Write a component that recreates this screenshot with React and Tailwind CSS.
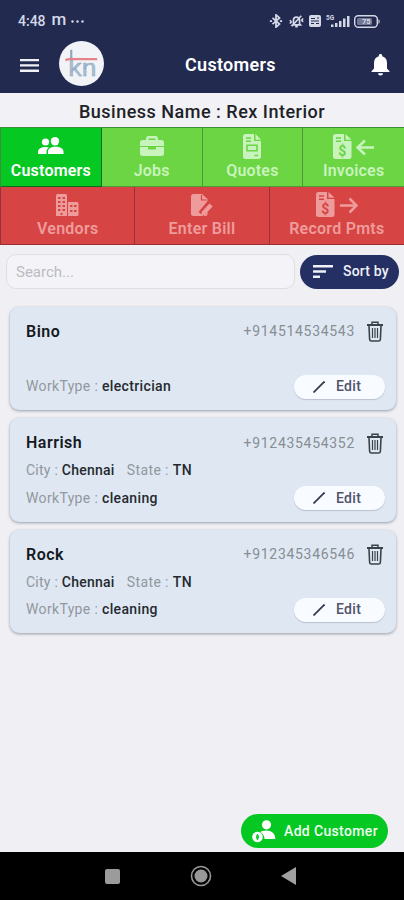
import React from "react";

const customers = [
  { id: 1, name: "Bino", phone: "+914514534543", workType: "electrician" },
  {
    id: 2,
    name: "Harrish",
    phone: "+912435454352",
    city: "Chennai",
    state: "TN",
    workType: "cleaning",
  },
  {
    id: 3,
    name: "Rock",
    phone: "+912345346546",
    city: "Chennai",
    state: "TN",
    workType: "cleaning",
  },
];

function StatusBar() {
  return (
    <div className="flex h-10 items-center pl-[18px] pr-[23px] pt-[2px] text-[#d5d8e6]">
      <span className="text-[14px] font-medium">4:48</span>
      <span className="ml-[6px] -mt-[3px] text-[17px] leading-none font-medium">m</span>
      <svg className="ml-[5px]" width="13" height="3" viewBox="0 0 13 3" fill="currentColor">
        <circle cx="1.5" cy="1.5" r="1.2" />
        <circle cx="6.5" cy="1.5" r="1.2" />
        <circle cx="11.5" cy="1.5" r="1.2" />
      </svg>
      <div className="ml-auto flex items-center">
        <svg width="14" height="14" viewBox="0 0 14 16" fill="none" stroke="currentColor" strokeWidth="2">
          <path d="M3 4.5l8 7L7 15V1l4 3.500-8 7" />
          <path d="M0 8h2.500M11.500 8H14" />
        </svg>
        <svg className="ml-[5px]" width="17" height="14" viewBox="0 0 17 16" fill="none" stroke="currentColor" strokeWidth="1.900">
          <path d="M5 11.500V7a3.500 3.500 0 0 1 7 0v4.500l1 1H4zM7 14.500h3M3 14L14 2M1 7l1.500 2L1 11M16 5l-1.500 2L16 9" />
        </svg>
        <svg className="ml-[4px]" width="12" height="12" viewBox="0 0 12 12">
          <rect width="12" height="12" rx="2" fill="currentColor" />
          <path d="M2 3.500h4M2 6h8M2 8.500h3M7 8.500h3M8 3h2" stroke="#222a50" strokeWidth="1" />
        </svg>
        <svg className="ml-[5px]" width="24" height="14" viewBox="0 0 24 14" fill="currentColor">
          <text x="0" y="5.500" fontSize="6.500" fontWeight="700" fontFamily="Roboto, sans-serif">5G</text>
          <path d="M5 10.500h2.500V13H5zM9 9h2.500v4H9zM13 7h2.500v6H13zM17 4.500h2.500V13H17zM21 2h2.500v11H21z" />
        </svg>
        <svg className="ml-[4px]" width="27" height="13" viewBox="0 0 27 13">
          <rect x=".7" y=".7" width="22.600" height="11.600" rx="3.500" fill="none" stroke="currentColor" strokeWidth="1.400" />
          <rect x="3" y="3" width="15" height="7" rx="1.500" fill="currentColor" opacity=".45" />
          <path d="M24.500 4q2.500 2.500 0 5z" fill="currentColor" />
          <text x="8" y="9.300" fontSize="7.500" fontWeight="700" fontFamily="Roboto, sans-serif" fill="currentColor">75</text>
        </svg>
      </div>
    </div>
  );
}

function Logo() {
  return (
    <div className="h-[45px] w-[45px] rounded-full bg-[#f2f3f7]">
      <svg width="45" height="45" viewBox="0 0 46 46">
        <text
          x="9.500"
          y="36"
          fontSize="24"
          fontFamily="Roboto, sans-serif"
          fill="#a9bfd2"
          stroke="#86a2bb"
          strokeWidth=".4"
          textLength="29"
          lengthAdjust="spacingAndGlyphs"
        >
          kn
        </text>
        <path d="M12.500 9v11" stroke="#8ca8c0" strokeWidth="2.200" />
        <path d="M6.500 19.500L10 18.500H39" stroke="#e58389" strokeWidth="2.400" fill="none" />
      </svg>
    </div>
  );
}

function AppBar() {
  return (
    <div className="grid h-[50px] grid-cols-[129px_1fr_129px] items-center">
      <div className="flex items-center pb-[3px] pl-5">
        <svg width="19" height="15" viewBox="0 0 19 15" fill="#f0f1f5" className="mt-[3px]">
          <path d="M0 1h19v2.300H0zM0 6.300h19v2.300H0zM0 11.600h19v2.300H0z" />
        </svg>
        <div className="ml-5">
          <Logo />
        </div>
      </div>
      <h1 className="-mt-px pl-14 text-[18px] font-semibold tracking-[0.3px] text-white">Customers</h1>
      <svg className="mr-[15px] justify-self-end" width="19" height="22" viewBox="0 0 19 22" fill="#fff">
        <path d="M9.500 0c1 0 1.700.7 1.700 1.700v.6c3 .8 4.800 3.200 4.800 6.700v5.500l2.500 2.700v.8H.5v-.8L3 14.500V9c0-3.500 1.800-5.900 4.800-6.700v-.6C7.800.7 8.500 0 9.500 0zM7 19.300h5a2.500 2.200 0 0 1-5 0z" />
      </svg>
    </div>
  );
}

function PeopleIcon() {
  return (
    <svg width="26" height="18" viewBox="0 0 26 18" fill="currentColor">
      <circle cx="7.500" cy="5" r="3.600" />
      <circle cx="17" cy="4.200" r="4.200" />
      <path d="M0 17v-2c0-3.300 3.500-5 7.500-5 1.200 0 2.300.2 3.300.5C9.300 11.700 8.500 13 8.500 15v2zM10 17v-2.500C10 11.500 13 9.700 17.500 9.700S25.500 11.500 25.500 14.500V17z" />
    </svg>
  );
}

function BriefcaseIcon() {
  return (
    <svg width="24" height="20" viewBox="0 0 24 20" fill="currentColor">
      <path
        fillRule="evenodd"
        d="M6 4V2.500Q6 0 8.500 0h7Q18 0 18 2.500V4h3.500Q24 4 24 6.500V10H0V6.500Q0 4 2.500 4zM8.500 4h7V2.500h-7z"
      />
      <path d="M0 11h8v1.500q0 1 1 1h6q1 0 1-1V11h8v6.500q0 2.500-2.500 2.500h-19Q0 20 0 17.500z" />
    </svg>
  );
}

function QuoteIcon({ hole }) {
  return (
    <svg width="18" height="25" viewBox="0 0 18 25">
      <path d="M2.500 0H11v7h7v15.500q0 2.500-2.500 2.500h-13Q0 25 0 22.500v-20Q0 0 2.500 0zM12.500 0L18 5.700h-5.500z" fill="currentColor" />
      <path d="M3 4h5M3 7.300h5M11.500 21.500H15" stroke={hole} strokeWidth="1.500" />
      <path d="M4 11.300h10v5.400H4z" fill="none" stroke={hole} strokeWidth="1.600" />
    </svg>
  );
}

function MoneyDocIcon({ hole, arrow }) {
  return (
    <svg width="42" height="25" viewBox="0 0 42 25" fill="none">
      <path d="M2.500 0H11v7h7.500v15.500q0 2.500-2.500 2.500H2.500Q0 25 0 22.500v-20Q0 0 2.500 0zM12.500 0l6 5.700h-6z" fill="currentColor" />
      <path d="M3 4h5M3 7.300h5" stroke={hole} strokeWidth="1.400" />
      <text x="9.300" y="21.500" textAnchor="middle" fontSize="14" fontWeight="700" fontFamily="Roboto, sans-serif" fill={hole}>$</text>
      <path
        d={arrow === "left" ? "M41 13.500H25M32 6.500l-7.500 7 7.500 7" : "M24 13.500h16M33.500 6.500l7 7-7 7"}
        stroke="currentColor"
        strokeWidth="2.500"
      />
    </svg>
  );
}

function BuildingIcon({ hole }) {
  return (
    <svg width="23" height="22" viewBox="0 0 23 22">
      <path d="M1.500 0h8Q11 0 11 1.500V22H0V1.500Q0 0 1.500 0zM12 8h9q1.500 0 1.500 1.500v11Q22.500 22 21 22h-9z" fill="currentColor" />
      <path d="M2 4h2.500M6.500 4H9M2 8h2.500M6.500 8H9M2 12h2.500M6.500 12H9M2 16h2.500M6.500 16H9M4.500 20h2M14 12h2.500M18 12h2.500M14 17h2.500M18 17h2.500" stroke={hole} strokeWidth="1.800" />
    </svg>
  );
}

function EnterBillIcon({ hole }) {
  return (
    <svg width="22" height="22" viewBox="0 0 22 22">
      <path d="M2.500 0H11l5.500 5v15q0 2-2 2h-12Q0 22 0 20V2.500Q0 0 2.500 0z" fill="currentColor" />
      <path d="M10.500 1v5h5" fill="none" stroke={hole} strokeWidth="1.200" />
      <path d="M10 20L20 8" stroke={hole} strokeWidth="6.500" />
      <path d="M10 22l1-4.500 7.500-8 3.200 3-7.700 8z" fill="currentColor" />
    </svg>
  );
}

const greenTabs = [
  { label: "Customers", icon: <PeopleIcon />, active: true },
  { label: "Jobs", icon: <BriefcaseIcon /> },
  { label: "Quotes", icon: <QuoteIcon hole="#6bd543" /> },
  { label: "Invoices", icon: <MoneyDocIcon hole="#6bd543" arrow="left" /> },
];

const redTabs = [
  { label: "Vendors", icon: <BuildingIcon hole="#d64444" /> },
  { label: "Enter Bill", icon: <EnterBillIcon hole="#d64444" /> },
  { label: "Record Pmts", icon: <MoneyDocIcon hole="#d64444" arrow="right" /> },
];

function Tabs() {
  return (
    <>
      <div className="grid h-[60px] grid-cols-4 border-t border-l border-[#3f8f3a]">
        {greenTabs.map((tab) => (
          <button
            key={tab.label}
            className={`flex flex-col items-center border-r border-b last:border-r-0 ${
              tab.active
                ? "border-[#0d6a24] bg-[#06c823] text-white"
                : "border-[#4c9a37] bg-[#6bd543] text-[#c8f3bd]"
            }`}
          >
            <span className="flex h-[33px] items-center pt-[3px]">{tab.icon}</span>
            <span className="text-[16px] leading-5 font-semibold tracking-[0.2px]">{tab.label}</span>
          </button>
        ))}
      </div>
      <div className="grid h-[58px] grid-cols-3 border-l border-[#983238]">
        {redTabs.map((tab) => (
          <button
            key={tab.label}
            className="flex flex-col items-center border-r border-b border-[#983238] bg-[#d64444] text-[#ee9c9b] last:border-r-0"
          >
            <span className="flex h-8 items-center pt-[3px]">{tab.icon}</span>
            <span className="text-[16px] leading-5 font-semibold tracking-[0.25px]">{tab.label}</span>
          </button>
        ))}
      </div>
    </>
  );
}

function SearchRow() {
  return (
    <div className="flex items-center gap-[5px] pt-[9px] pr-[5px] pl-[6px]">
      <input
        className="h-[35px] w-[289px] rounded-[10px] border border-[#dedee3] bg-[#f3f3f8] px-[9px] text-[15px] placeholder:text-[#bbbcc2]"
        placeholder="Search..."
      />
      <button className="flex h-[34px] flex-1 items-center rounded-full bg-[#243063] pl-[13px] text-[14px] font-medium tracking-[0.2px] text-[#f0f1f8]">
        <svg width="20" height="15" viewBox="0 0 20 15" fill="currentColor">
          <path d="M0 1h20v2.500H0zM0 6.300h13v2.500H0zM0 11.600h7v2.500H0z" />
        </svg>
        <span className="ml-[10px]">Sort by</span>
      </button>
    </div>
  );
}

function TrashIcon() {
  return (
    <svg width="16" height="21" viewBox="0 0 16 21" fill="none" stroke="#3b4249">
      <path d="M0 4h16" strokeWidth="2" />
      <path d="M5 4V1.200h6V4" strokeWidth="1.500" />
      <path d="M2 5l.6 13.200q.1 1.800 1.800 1.800h7.200q1.700 0 1.800-1.800L14 5" strokeWidth="1.600" />
      <path d="M5.500 7v10M8 7v10M10.500 7v10" strokeWidth="1.200" />
    </svg>
  );
}

function CustomerCard({ data }) {
  return (
    <div className="h-[103.5px] rounded-[9px] bg-[#dfe8f2] pr-[11px] pl-4 shadow-[0_1px_3px_rgba(70,75,90,0.5)]">
      <div className="flex h-[50px] items-center">
        <h2 className="text-[16px] font-semibold tracking-[0.5px] text-[#15191f]">{data.name}</h2>
        <span className="ml-auto text-[14px] tracking-[0.7px] text-[#878d94]">{data.phone}</span>
        <button className="mr-[2px] ml-3">
          <TrashIcon />
        </button>
      </div>
      <div className="flex h-[5px] items-center text-[14px] tracking-[0.25px] text-[#91979e]">
        {data.city && (
          <>
            <span>
              City : <b className="font-medium text-[#252a30]">{data.city}</b>
            </span>
            <span className="ml-3 tracking-[0.4px]">
              State : <b className="font-medium text-[#252a30]">{data.state}</b>
            </span>
          </>
        )}
      </div>
      <div className="mt-[13px] flex h-6 items-center text-[14px] text-[#91979e]">
        <span className="tracking-[0.35px]">
          WorkType : <b className="font-medium text-[#252a30]">{data.workType}</b>
        </span>
        <button className="ml-auto flex h-6 w-[91px] items-center rounded-full bg-[#f8fbff] pl-[19px] font-medium tracking-[0.3px] text-[#50536a] shadow-[0_1px_1px_rgba(70,75,90,0.25)]">
          <svg width="12" height="12" viewBox="0 0 12 12" stroke="#34384d" strokeWidth="1.800">
            <path d="M.5 11.500l11-11" />
          </svg>
          <span className="ml-[11px]">Edit</span>
        </button>
      </div>
    </div>
  );
}

function AddCustomerButton() {
  return (
    <button className="mr-4 mb-1 flex h-[34px] w-[147px] items-center self-end rounded-full bg-[#06c823] pl-[11px] text-[14px] font-medium tracking-[0.35px] text-[#effff0]">
      <svg className="shrink-0" width="24" height="23" viewBox="0 0 24 23" fill="#fff">
        <circle cx="14.500" cy="4.800" r="4.600" />
        <path d="M8 12q2.500-1.500 6-1.500 9 0 9.500 8.500H12.500q-.5-5.500-4.500-7z" />
        <circle cx="5.500" cy="17" r="5.300" />
        <path d="M5.500 14l1.300 3-1.300 3-1.300-3z" fill="#06c823" stroke="#06c823" strokeWidth=".8" />
      </svg>
      <span className="ml-2 whitespace-nowrap">Add Customer</span>
    </button>
  );
}

function NavBar() {
  return (
    <div className="h-12 bg-black">
      <div className="grid h-full grid-cols-[120px_92px_84px] items-center justify-items-end">
        <span className="h-[15px] w-[15px] rounded-[2px] bg-[#9b9b9b]" />
        <svg width="22" height="22" viewBox="0 0 22 22">
          <circle cx="11" cy="11" r="9.500" fill="none" stroke="#989898" strokeWidth="1.600" />
          <circle cx="11" cy="11" r="6.500" fill="#989898" />
        </svg>
        <svg width="15" height="18" viewBox="0 0 15 18">
          <path d="M15 0v18L0 9z" fill="#a0a0a0" />
        </svg>
      </div>
    </div>
  );
}

export default function App() {
  return (
    <div className="flex h-[900px] w-[404px] flex-col overflow-hidden bg-[#efeff4] font-[Roboto,sans-serif]">
      <header className="h-[93px] bg-[#222a50]">
        <StatusBar />
        <AppBar />
      </header>
      <p className="h-[34px] bg-[#f1f1f6] pt-[2px] text-center text-[18px] leading-[33px] font-medium tracking-[0.5px] text-[#202126]">
        Business Name : Rex Interior
      </p>
      <Tabs />
      <SearchRow />
      <div className="mt-[17.5px] flex flex-1 flex-col gap-2 pr-2 pl-[10px]">
        {customers.map((customer) => (
          <CustomerCard key={customer.id} data={customer} />
        ))}
      </div>
      <AddCustomerButton />
      <NavBar />
    </div>
  );
}
